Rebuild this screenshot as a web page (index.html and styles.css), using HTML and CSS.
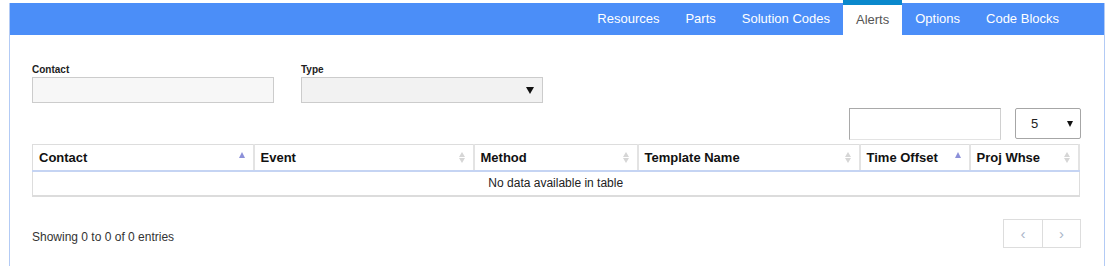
FILE: index.html
```html
<!DOCTYPE html>
<html lang="en">
<head>
  <meta charset="UTF-8">
  <title>Alerts</title>
  <link rel="stylesheet" href="styles.css">
</head>
<body>
  <div class="panel">
    <div class="tabbar">
      <ul class="tabs">
        <li>Resources</li>
        <li>Parts</li>
        <li>Solution Codes</li>
        <li class="active">Alerts</li>
        <li>Options</li>
        <li>Code Blocks</li>
      </ul>
    </div>

    <div class="content">
      <div class="filters">
        <div class="field">
          <label>Contact</label>
          <div class="input"></div>
        </div>
        <div class="field">
          <label>Type</label>
          <div class="select"><span class="caret"></span></div>
        </div>
      </div>

      <div class="toolbar">
        <div class="search"></div>
        <div class="length">5<span class="caret"></span></div>
      </div>

      <table class="grid">
        <colgroup>
          <col class="col-contact">
          <col class="col-event">
          <col class="col-method">
          <col class="col-template">
          <col class="col-offset">
          <col class="col-whse">
        </colgroup>
        <thead>
          <tr>
            <th>Contact<i class="sort asc"></i></th>
            <th>Event<i class="sort both"></i></th>
            <th>Method<i class="sort both"></i></th>
            <th>Template Name<i class="sort both"></i></th>
            <th>Time Offset<i class="sort asc"></i></th>
            <th>Proj Whse<i class="sort both"></i></th>
          </tr>
        </thead>
        <tbody>
          <tr>
            <td colspan="6" class="empty">No data available in table</td>
          </tr>
        </tbody>
      </table>

      <div class="footer">
        <div class="info">Showing 0 to 0 of 0 entries</div>
        <div class="pager">
          <div class="page-btn">&lsaquo;</div>
          <div class="page-btn">&rsaquo;</div>
        </div>
      </div>
    </div>
  </div>
</body>
</html>
```

FILE: styles.css
```css
:root {
  --header-blue: #4b8ef8;
  --active-top: #0a88cc;
  --panel-border: #b3cbf5;
  --cell-border: #dddddd;
  --text-dark: #111;
}

* {
  box-sizing: border-box;
}

body {
  margin: 0;
  background: #fff;
  font-family: "Liberation Sans", Arial, sans-serif;
  color: #333;
}

.panel {
  margin: 3px 0 0 9px;
  width: 1096px;
  height: 263px;
  border-left: 1px solid var(--panel-border);
  border-right: 1px solid var(--panel-border);
}

.tabbar {
  background: var(--header-blue);
  height: 32px;
  display: flex;
  justify-content: flex-end;
  padding-right: 32px;
}

.tabs {
  list-style: none;
  margin: 0;
  padding: 0;
  display: flex;
}

.tabs li {
  padding: 0 13px;
  font-size: 13px;
  line-height: 32px;
  color: #fff;
}

.tabs li.active {
  background: #fff;
  color: #555;
  border-top: 5px solid var(--active-top);
  margin-top: -3px;
  height: 35px;
  line-height: 30px;
}

.content {
  padding: 29px 23px 0 22px;
}

.filters {
  display: flex;
  gap: 27px;
}

.field label {
  display: block;
  font-size: 10px;
  font-weight: bold;
  color: #222;
  line-height: 12px;
  margin-bottom: 1px;
}

.input,
.select {
  width: 242px;
  height: 26px;
  border: 1px solid #cccccc;
  background: #f7f7f7;
}

.select {
  background: #f2f2f2;
  display: flex;
  align-items: center;
  justify-content: flex-end;
  padding-right: 8px;
}

.caret {
  width: 0;
  height: 0;
  border-left: 4px solid transparent;
  border-right: 4px solid transparent;
  border-top: 7px solid #111;
}

.toolbar {
  display: flex;
  justify-content: flex-end;
  gap: 14px;
  margin-top: 5px;
}

.search {
  width: 152px;
  height: 32px;
  border: 1px solid #a9a9a9;
  border-bottom-color: #e3e3e3;
  border-right-color: #d0d0d0;
}

.length {
  width: 66px;
  height: 31px;
  border: 1px solid #a6a6a6;
  border-radius: 2px;
  display: flex;
  align-items: center;
  justify-content: space-between;
  padding: 0 7px 0 15px;
  font-size: 13px;
  color: #222;
}

.length .caret {
  border-left-width: 3px;
  border-right-width: 3px;
  border-top-width: 6px;
}

.grid {
  width: 1048px;
  margin-top: 4px;
  border-collapse: collapse;
  border: 1px solid var(--cell-border);
  table-layout: fixed;
}

.col-contact { width: 221px; }
.col-event { width: 220px; }
.col-method { width: 164px; }
.col-template { width: 222px; }
.col-offset { width: 110px; }

.grid th {
  height: 26px;
  padding: 0 18px 0 6px;
  font-size: 13px;
  font-weight: bold;
  color: var(--text-dark);
  text-align: left;
  white-space: nowrap;
  border-right: 2px solid #e3e3e3;
  border-bottom: 2px solid #c5d4f3;
  position: relative;
}

.sort {
  position: absolute;
  right: 7px;
  top: 6px;
  width: 7px;
  height: 12px;
}

.sort.asc::before {
  content: "";
  position: absolute;
  top: 1px;
  left: 0;
  border-left: 3.5px solid transparent;
  border-right: 3.5px solid transparent;
  border-bottom: 6px solid #8c90d9;
}

.sort.both::before,
.sort.both::after {
  content: "";
  position: absolute;
  left: 0;
  border-left: 3.5px solid transparent;
  border-right: 3.5px solid transparent;
}

.sort.both::before {
  top: 1px;
  border-bottom: 5px solid #d6d6d6;
}

.sort.both::after {
  top: 7px;
  border-top: 5px solid #d6d6d6;
}

.grid td.empty {
  height: 25px;
  text-align: center;
  font-size: 12px;
  color: #222;
  border-bottom: 2px solid #dcdcdc;
}

.footer {
  display: flex;
  justify-content: space-between;
  align-items: center;
  margin-top: 22px;
}

.info {
  font-size: 12px;
  color: #333;
  padding-top: 7px;
}

.pager {
  display: flex;
  border: 1px solid #dddddd;
  height: 29px;
}

.page-btn {
  width: 38px;
  display: flex;
  align-items: center;
  justify-content: center;
  font-size: 15px;
  color: #a8b4c8;
}

.page-btn + .page-btn {
  border-left: 1px solid #dddddd;
}
```
